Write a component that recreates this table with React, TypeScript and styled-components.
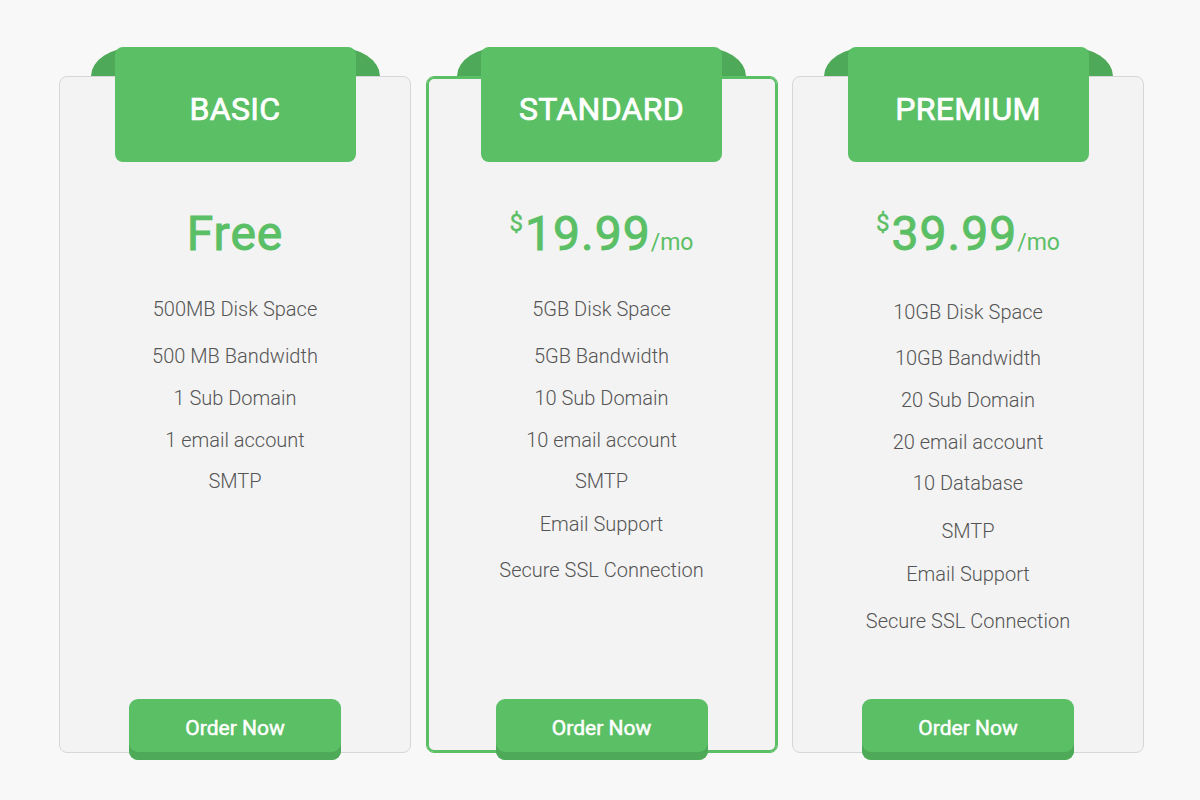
import React from "react";
import styled, { createGlobalStyle, css } from "styled-components";

const GREEN = "#5bbf66";
const DARK = "#4ea958";

const Global = createGlobalStyle`
  html, body { margin: 0; padding: 0; }
  body {
    background: #f8f8f8;
    font-family: Roboto, "Liberation Sans", sans-serif;
    width: 1200px;
    height: 800px;
    overflow: hidden;
  }
`;

const medium = (stroke: number) => css`
  font-weight: 400;
  -webkit-text-stroke: ${stroke}px currentColor;
`;

const Row = styled.div`
  display: flex;
  gap: 14.5px;
  padding: 47px 0 0 59px;
`;

const Column = styled.div`
  display: flex;
  flex-direction: column;
  width: 352px;
`;

const Ear = styled.div`
  align-self: center;
  width: 289px;
  height: 29px;
  background: ${DARK};
  border-radius: 45px 45px 0 0 / 29px 29px 0 0;
`;

const Card = styled.div<{ $featured?: boolean }>`
  box-sizing: border-box;
  height: 677px;
  display: flex;
  flex-direction: column;
  align-items: center;
  background: #f3f3f3;
  border: 1px solid ${(p) => (p.$featured ? GREEN : "#d7d7d7")};
  box-shadow: ${(p) => (p.$featured ? `inset 0 0 0 2px ${GREEN}` : "none")};
  border-radius: 8px;
`;

const Tab = styled.div`
  box-sizing: border-box;
  margin-top: -30px;
  width: 241px;
  height: 115px;
  padding-top: 9px;
  display: flex;
  align-items: center;
  justify-content: center;
  background: ${GREEN};
  border-radius: 8px;
  color: #fff;
  font-size: 32px;
  letter-spacing: 0.3px;
  ${medium(0.7)}
`;

const Price = styled.div`
  margin-top: 48px;
  height: 48px;
  line-height: 48px;
  color: ${GREEN};
  font-size: 48px;
  ${medium(1)}
  white-space: nowrap;
  text-align: center;
`;

const Amount = styled.span`
  letter-spacing: 1px;
`;

const Currency = styled.span`
  font-size: 24px;
  line-height: 1;
  vertical-align: 19px;
  margin-right: 2px;
  -webkit-text-stroke: 0.4px currentColor;
`;

const Per = styled.span`
  font-size: 23px;
  font-weight: 400;
  line-height: 1;
  -webkit-text-stroke: 0;
`;

const Features = styled.ul`
  list-style: none;
  margin: 30px 0 0;
  padding: 0;
  flex: 1;
  text-align: center;
`;

const Feature = styled.li<{ $extra: number }>`
  margin-top: ${(p) => p.$extra}px;
  line-height: 42px;
  font-size: 20px;
  font-weight: 300;
  color: #555;
  white-space: nowrap;
`;

const OrderButton = styled.button`
  box-sizing: border-box;
  width: 212px;
  height: 61px;
  margin-bottom: -8px;
  padding: 0 0 4px;
  border: none;
  border-radius: 9px;
  background: ${GREEN};
  box-shadow: inset 0 -8px 0 ${DARK};
  color: #fff;
  font-family: Roboto, "Liberation Sans", sans-serif;
  font-size: 21px;
  ${medium(0.5)}
  cursor: pointer;
`;

type Plan = {
  name: string;
  amount: string;
  monthly: boolean;
  featured?: boolean;
  features: [string, number][];
};

const plans: Plan[] = [
  {
    name: "BASIC",
    amount: "Free",
    monthly: false,
    features: [
      ["500MB Disk Space", 0],
      ["500 MB Bandwidth", 5],
      ["1 Sub Domain", 0],
      ["1 email account", 0],
      ["SMTP", -1],
    ],
  },
  {
    name: "STANDARD",
    amount: "19.99",
    monthly: true,
    featured: true,
    features: [
      ["5GB Disk Space", 0],
      ["5GB Bandwidth", 5],
      ["10 Sub Domain", 0],
      ["10 email account", 0],
      ["SMTP", -1],
      ["Email Support", 1],
      ["Secure SSL Connection", 4],
    ],
  },
  {
    name: "PREMIUM",
    amount: "39.99",
    monthly: true,
    features: [
      ["10GB Disk Space", 2.5],
      ["10GB Bandwidth", 4],
      ["20 Sub Domain", 0],
      ["20 email account", 0],
      ["10 Database", -1],
      ["SMTP", 6],
      ["Email Support", 1],
      ["Secure SSL Connection", 5],
    ],
  },
];

export default function App() {
  return (
    <>
      <Global />
      <Row>
        {plans.map((plan) => (
          <Column key={plan.name}>
            <Ear />
            <Card $featured={plan.featured}>
              <Tab>{plan.name}</Tab>
              <Price>
                {plan.monthly ? (
                  <>
                    <Currency>$</Currency>
                    <Amount>{plan.amount}</Amount>
                    <Per>/mo</Per>
                  </>
                ) : (
                  <Amount>{plan.amount}</Amount>
                )}
              </Price>
              <Features>
                {plan.features.map(([text, extra]) => (
                  <Feature key={text} $extra={extra}>
                    {text}
                  </Feature>
                ))}
              </Features>
              <OrderButton>Order Now</OrderButton>
            </Card>
          </Column>
        ))}
      </Row>
    </>
  );
}
